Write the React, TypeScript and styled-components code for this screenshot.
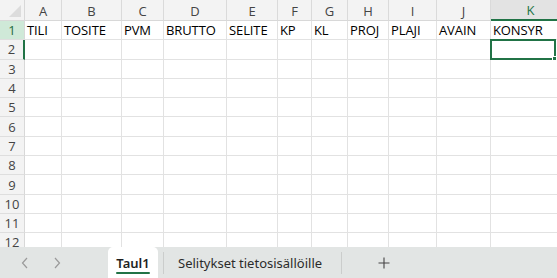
import React from "react";
import styled, { createGlobalStyle } from "styled-components";

const COLS = [
    { key: "A", width: 37, title: "TILI" },
    { key: "B", width: 60, title: "TOSITE" },
    { key: "C", width: 42, title: "PVM" },
    { key: "D", width: 63, title: "BRUTTO" },
    { key: "E", width: 51, title: "SELITE" },
    { key: "F", width: 34, title: "KP" },
    { key: "G", width: 36, title: "KL" },
    { key: "H", width: 41, title: "PROJ" },
    { key: "I", width: 48, title: "PLAJI" },
    { key: "J", width: 54, title: "AVAIN" },
    { key: "K", width: 80, title: "KONSYR" },
];

const ROWS = 12;
const SEL_COL = "K";
const SEL_ROW = 2;

const Global = createGlobalStyle`
    html, body { margin: 0; padding: 0; background: #fff; }
    body { font-family: "Open Sans", "Noto Sans", sans-serif; overflow: hidden; }
`;

const Page = styled.div`
    width: 557px;
    height: 278px;
    display: flex;
    flex-direction: column;
    overflow: hidden;
`;

const Sheet = styled.div`
    height: 247px;
    overflow: hidden;
    display: grid;
    grid-template-columns: 25px ${COLS.map(c => c.width + "px").join(" ")};
    grid-template-rows: 21px;
    grid-auto-rows: 19.3px;
`;

const Corner = styled.div`
    position: relative;
    background: #f3f3f3;
    border-right: 1px solid #d8d8d8;
    border-bottom: 1px solid #d8d8d8;

    &::after {
        content: "";
        position: absolute;
        right: 3px;
        bottom: 3px;
        border-left: 12px solid transparent;
        border-bottom: 12px solid #dcdcdc;
    }
`;

const ColHead = styled.div<{ $sel: boolean }>`
    display: flex;
    align-items: center;
    justify-content: center;
    font-size: 13px;
    background: ${p => p.$sel ? "#e3e3e3" : "#f3f3f3"};
    color: ${p => p.$sel ? "#217346" : "#444"};
    border-right: 1px solid #dadada;
    border-bottom: ${p => p.$sel ? "2px solid #217346" : "1px solid #d8d8d8"};
    padding-top: 1px;
`;

const RowHead = styled.div<{ $fill: boolean; $mark: boolean }>`
    display: flex;
    align-items: center;
    justify-content: center;
    font-size: 13px;
    background: ${p => p.$fill ? "#cfe9d8" : "#f3f3f3"};
    color: ${p => p.$fill ? "#1f6b40" : "#444"};
    border-bottom: 1px solid #dedede;
    border-right: ${p => p.$mark ? "2px solid #217346" : "1px solid #d8d8d8"};
`;

const Cell = styled.div`
    position: relative;
    border-right: 1px solid #e2e2e2;
    border-bottom: 1px solid #e2e2e2;
    font-size: 13px;
    color: #000;
    padding: 0 2px;
    display: flex;
    align-items: center;
    white-space: nowrap;
    letter-spacing: -0.1px;
`;

const Selection = styled.div`
    position: absolute;
    left: -1px;
    top: -1px;
    width: 66px;
    bottom: -1px;
    border: 2px solid #217346;
    box-sizing: border-box;

    &::after {
        content: "";
        position: absolute;
        right: -3px;
        bottom: -3px;
        width: 5px;
        height: 5px;
        background: #217346;
        border: 1px solid #fff;
        box-sizing: border-box;
    }
`;

const TabBar = styled.div`
    flex: 1;
    background: #e2e5e4;
    display: flex;
    align-items: stretch;
    font-family: "Noto Sans", "Open Sans", sans-serif;
`;

const NavGroup = styled.div`
    width: 108px;
    display: flex;
    align-items: center;
    padding-left: 18px;
    gap: 18px;
    box-sizing: border-box;
`;

const NavBtn = styled.span`
    display: inline-flex;
    width: 14px;
    justify-content: center;
`;

const Tab = styled.div<{ $active?: boolean }>`
    display: flex;
    align-items: center;
    position: relative;
    padding: 0 ${p => p.$active ? "8px" : "14px"};
    background: ${p => p.$active ? "#fff" : "transparent"};
    border-radius: ${p => p.$active ? "5px 5px 0 0" : "0"};
    font-size: 13px;
    font-weight: ${p => p.$active ? 600 : 400};
    color: ${p => p.$active ? "#1f1f1f" : "#2b2b2b"};
    width: ${p => p.$active ? "50px" : "auto"};
    box-sizing: border-box;
    justify-content: center;

    &::after {
        content: "";
        display: ${p => p.$active ? "block" : "none"};
        position: absolute;
        left: 8px;
        right: 8px;
        bottom: 4px;
        height: 2px;
        border-radius: 1px;
        background: #217346;
    }
`;

const Divider = styled.span`
    align-self: center;
    width: 1px;
    height: 22px;
    background: #cbcdcc;
    margin-left: 5px;
`;

const AddBtn = styled.div`
    display: flex;
    align-items: center;
    padding: 0 0 0 36px;
`;

function Chevron({ dir }: { dir: "l" | "r" })
{
    return (
        <svg width="8" height="12" viewBox="0 0 8 12">
            <path
                d={dir === "l" ? "M6 1 L1.5 6 L6 11" : "M2 1 L6.5 6 L2 11"}
                fill="none"
                stroke="#9a9a9a"
                strokeWidth="1.2"
            />
        </svg>
    );
}

function Plus()
{
    return (
        <svg width="12" height="12" viewBox="0 0 12 12">
            <path d="M6 0.5 V11.5 M0.5 6 H11.5" stroke="#444" strokeWidth="1.1"/>
        </svg>
    );
}

export default function App()
{
    const rows = [];
    for (let r = 1; r <= ROWS; r++)
    {
        rows.push(
            <RowHead key={`h${r}`} $fill={r === 1} $mark={r === SEL_ROW}>{r}</RowHead>
        );
        COLS.forEach(c =>
        {
            rows.push(
                <Cell key={`${c.key}${r}`}>
                    {r === 1 ? c.title : null}
                    {r === SEL_ROW && c.key === SEL_COL ? <Selection/> : null}
                </Cell>
            );
        });
    }

    return (
        <Page>
            <Global/>
            <Sheet>
                <Corner/>
                {COLS.map(c => <ColHead key={c.key} $sel={c.key === SEL_COL}>{c.key}</ColHead>)}
                {rows}
            </Sheet>
            <TabBar>
                <NavGroup>
                    <NavBtn><Chevron dir="l"/></NavBtn>
                    <NavBtn><Chevron dir="r"/></NavBtn>
                </NavGroup>
                <Tab $active>Taul1</Tab>
                <Divider/>
                <Tab>Selitykset tietosisällöille</Tab>
                <Divider/>
                <AddBtn><Plus/></AddBtn>
            </TabBar>
        </Page>
    );
}
